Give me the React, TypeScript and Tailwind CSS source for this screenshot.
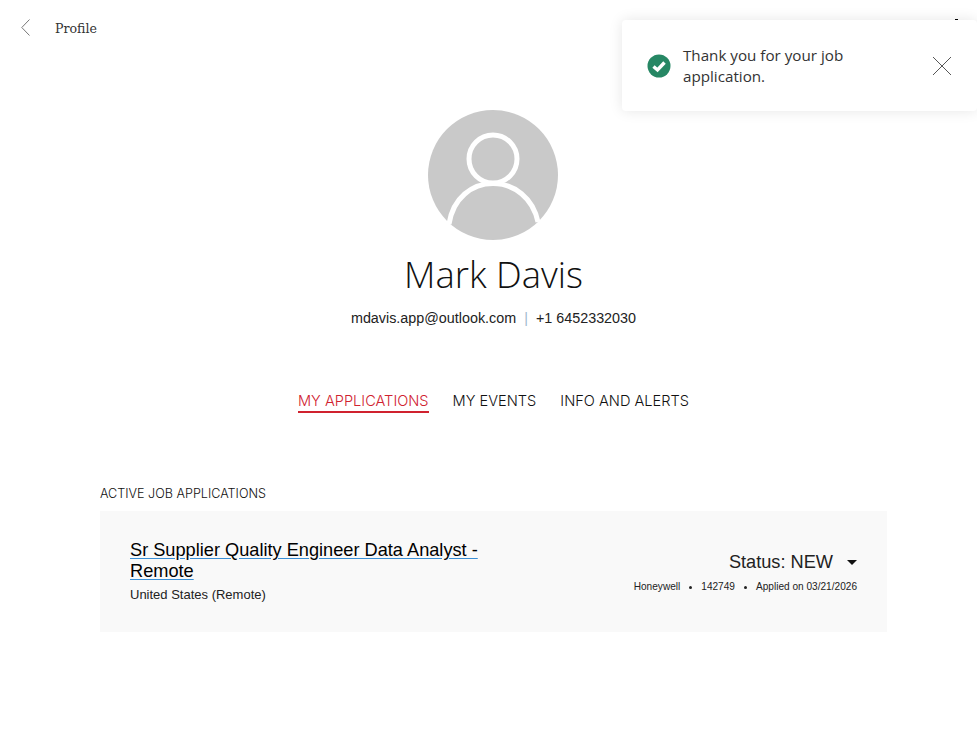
export default function App() {
  return (
    <div className="relative min-h-[752px] w-full overflow-hidden bg-white font-['Liberation_Sans',sans-serif] text-[#222]">
      <header className="flex h-[56px] items-center pl-[21px]">
        <svg width="9" height="17" viewBox="0 0 9 17" fill="none" stroke="#777" strokeWidth="1" className="mb-[1px]">
          <path d="M8.5 0.5 L0.8 8.5 L8.5 16.5" />
        </svg>
        <span className="mt-[3px] ml-[25px] font-['DejaVu_Serif',serif] text-[12.6px] text-[#333]">Profile</span>
      </header>

      <main className="flex w-[987px] flex-col items-center">
        <div className="mt-[54px] mr-[1px] h-[130px] w-[130px]">
          <svg width="130" height="130" viewBox="0 0 130 130">
            <circle cx="65" cy="65" r="65" fill="#c9c9c9" />
            <circle cx="65" cy="49" r="24" fill="none" stroke="#fff" strokeWidth="5" />
            <path d="M21 114 C25 88 44 73.5 65 73.5 C86 73.5 105 88 110 112" fill="none" stroke="#fff" strokeWidth="5" />
          </svg>
        </div>
        <h1 className="mt-[11px] font-['Open_Sans',sans-serif] text-[36.4px] leading-[46px] font-light text-[#111]">Mark Davis</h1>
        <div className="mt-[11px] flex items-center text-[14.35px] leading-[20px]">
          <span>mdavis.app@outlook.com</span>
          <span className="mx-[8px] text-[#9fb8cc]">|</span>
          <span>+1 6452332030</span>
        </div>

        <nav className="mt-[63px] flex gap-[24px] font-['Inter',sans-serif] text-[14.6px] leading-[20px] font-light text-[#111]">
          <a className="border-b-2 border-[#d0222f] text-[#d0222f]">MY APPLICATIONS</a>
          <a>MY EVENTS</a>
          <a>INFO AND ALERTS</a>
        </nav>

        <section className="mt-[72px] w-[787px]">
          <h2 className="font-['Inter',sans-serif] text-[12.6px] leading-[18px] font-light text-[#111]">ACTIVE JOB APPLICATIONS</h2>
          <div className="mt-[8px] flex h-[121px] items-start justify-between bg-[#f9f9f9] pt-[29px] pr-[30px] pl-[30px]">
            <div className="w-[360px]">
              <a className="block text-[18.2px] leading-[21px] text-black underline decoration-[#3a8fd6] underline-offset-2">
                Sr Supplier Quality Engineer Data Analyst - Remote
              </a>
              <div className="mt-[5px] text-[13px] leading-[16px]">United States (Remote)</div>
            </div>
            <div className="mt-[11px] flex flex-col items-end">
              <div className="flex items-center text-[18.2px] leading-[22px]">
                <span>Status: NEW</span>
                <svg className="ml-[14px]" width="10" height="5" viewBox="0 0 10 5">
                  <path d="M0 0 H10 L5 5 Z" fill="#111" />
                </svg>
              </div>
              <div className="mt-[8px] flex items-center text-[10.1px] leading-[12px]">
                <span>Honeywell</span>
                <span className="mx-[9px] h-[3px] w-[3px] rounded-full bg-[#222]" />
                <span>142749</span>
                <span className="mx-[9px] h-[3px] w-[3px] rounded-full bg-[#222]" />
                <span>Applied on 03/21/2026</span>
              </div>
            </div>
          </div>
        </section>
      </main>

      <div className="absolute top-[19px] left-[955px] h-[3px] w-[3px] bg-black" />
      <div className="absolute top-[20px] right-0 flex h-[91px] w-[355px] items-center rounded-[4px] bg-white pr-[25px] pl-[25px] shadow-[0_0_14px_rgba(0,0,0,0.1)]">
        <svg width="24" height="24" viewBox="0 0 24 24" className="shrink-0">
          <circle cx="12" cy="12" r="11.5" fill="#268764" />
          <path d="M6.5 12.5 L10.5 16 L17.5 8.5" fill="none" stroke="#fff" strokeWidth="3.4" />
        </svg>
        <p className="ml-[12px] w-[200px] font-['Open_Sans',sans-serif] text-[15.2px] leading-[21px] text-[#333]">Thank you for your job application.</p>
        <svg className="ml-auto" width="20" height="20" viewBox="0 0 20 20" stroke="#444" strokeWidth="0.9" fill="none">
          <path d="M1 1 L19 19 M19 1 L1 19" />
        </svg>
      </div>
    </div>
  );
}
